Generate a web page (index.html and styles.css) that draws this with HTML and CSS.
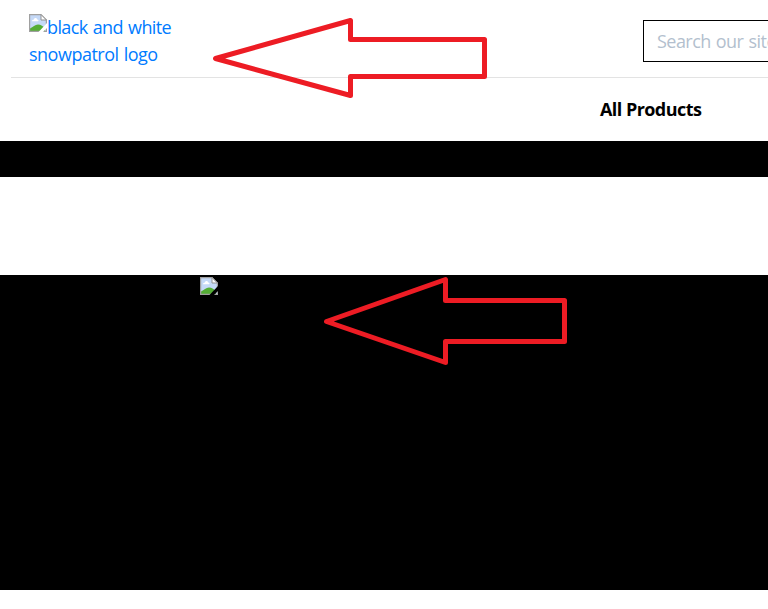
FILE: index.html
```html
<!DOCTYPE html>
<html lang="en">
<head>
<meta charset="utf-8">
<title>Snowpatrol</title>
<link rel="stylesheet" href="styles.css">
</head>
<body>
<svg class="defs" width="0" height="0" aria-hidden="true">
  <symbol id="missing" viewBox="0 0 18 18">
    <path d="M.6.6H12L17.4 6V17.4H.6Z" fill="#c5d9f7"/>
    <path d="M3 7.3C3 5.8 4.3 5.6 4.7 5.7 5.2 3.2 8 3.4 8.2 5.5 9.7 5.3 9.8 7.3 9 7.3Z" fill="#fff"/>
    <path d="M1 17V14.5C4 13 6 10.5 9 10.5S13 12 16 14V17Z" fill="#54ad35"/>
    <path d="M.6 17.4V.6H12L17.4 6V17.4Z" fill="none" stroke="#a0a0a0" stroke-width="1.2"/>
    <path d="M12 .6V6h5.4Z" fill="#fff" stroke="#929292"/>
    <path class="tear" d="M9.5 18 18 9V14L14 18Z"/>
  </symbol>
</svg>
<header class="header">
  <div class="top">
    <a class="logo"><svg class="missing"><use href="#missing"/></svg><span class="line1">black and white</span><br><span class="line2">snowpatrol logo</span></a>
    <div class="search"><span>Search our site</span></div>
  </div>
  <nav class="nav"><a>All Products</a></nav>
</header>
<div class="band"></div>
<main class="hero"><svg class="missing dark"><use href="#missing"/></svg></main>
<svg class="arrows" viewBox="0 0 768 609">
  <path d="M215.5 58.5 350.5 20.5V39.5H484.5V76.5H350.5V95.5Z"/>
  <path d="M326.5 321.5 445.5 279.5V300.5H564.5V341.5H445.5V362.5Z"/>
</svg>
</body>
</html>
```
FILE: styles.css
```css
* { box-sizing: border-box; }
body {
  margin: 0;
  height: 609px;
  overflow: hidden;
  background: #fff;
  font: 18px/27px "Open Sans", "Noto Sans", sans-serif;
}
.defs { position: absolute; }
.header { height: 141px; overflow: hidden; }
.top {
  display: flex;
  justify-content: space-between;
  height: 78px;
  margin-left: 11px;
  padding: 14px 0 0 18px;
  border-bottom: 1px solid #e3e3e3;
}
.logo { color: #007bff; white-space: nowrap; }
.missing { display: inline-block; width: 18px; height: 18px; vertical-align: top; --tear: #fff; }
.missing.dark { --tear: #000; }
.tear { fill: var(--tear); }
.line1 { letter-spacing: -0.6px; word-spacing: 1px; }
.line2 { letter-spacing: -0.5px; word-spacing: 1px; }
.search {
  width: 125px;
  height: 42px;
  margin-top: 6px;
  padding: 7px 0 0 13px;
  border: 1px solid #000;
  border-right: 0;
  overflow: hidden;
  color: #b3bfce;
  white-space: nowrap;
  letter-spacing: -0.55px;
  word-spacing: 1px;
}
.nav { padding: 18px 0 0 600px; font-weight: 700; color: #000; letter-spacing: -0.55px; }
.band { height: 36px; background: #000; }
.hero { height: 315px; margin-top: 98px; padding: 2px 0 0 200px; background: #000; }
.arrows { position: absolute; left: 0; top: 0; width: 768px; height: 609px; }
.arrows path { fill: none; stroke: #ed1c24; stroke-width: 5; stroke-linejoin: round; }
```
